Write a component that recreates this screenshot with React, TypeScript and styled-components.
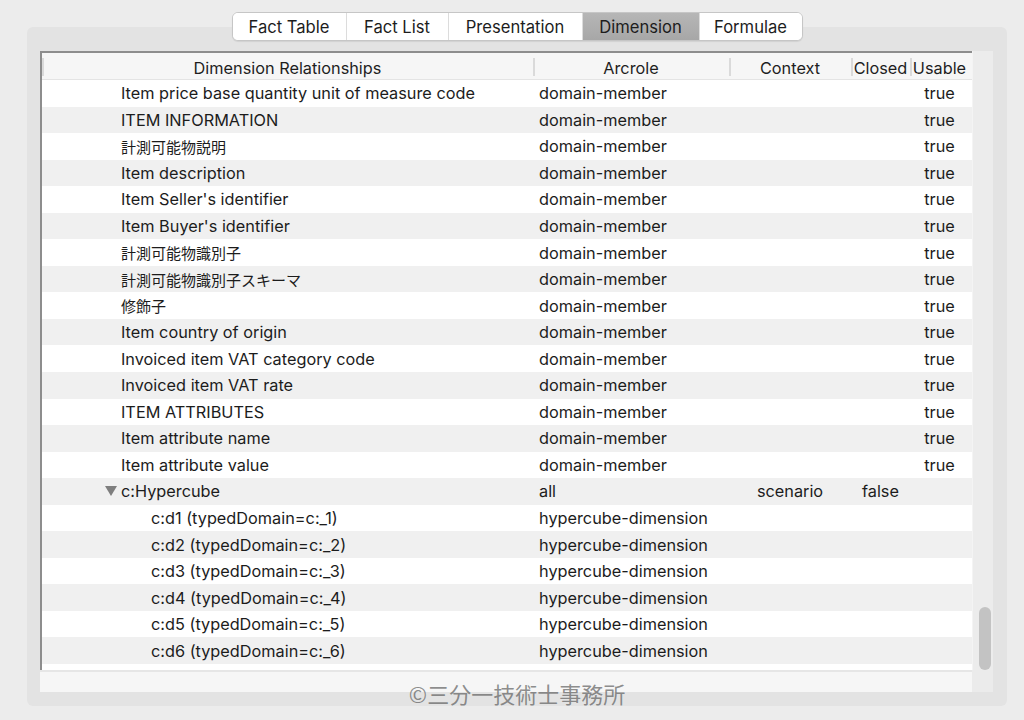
import React from "react";
import styled, { createGlobalStyle } from "styled-components";

const GlobalStyle = createGlobalStyle`
  html, body { margin: 0; padding: 0; background: #ececec; }
  body { font-family: Inter, "Noto Sans", "Noto Sans CJK JP", sans-serif; color: #1c1c1c; }
  * { box-sizing: border-box; }
`;

const FONT = `Inter, "Noto Sans CJK JP", sans-serif`;

const Page = styled.div`
  position: relative;
  width: 1024px;
  height: 720px;
  padding: 12px 17px 14px 27px;
  display: flex;
  flex-direction: column;
`;

const TabBar = styled.div`
  position: relative;
  z-index: 1;
  align-self: center;
  display: flex;
  height: 29px;
  margin-bottom: -14px;
  background: #ffffff;
  border: 1px solid #c6c6c6;
  border-radius: 6px;
  box-shadow: 0 1px 1px rgba(0, 0, 0, 0.08);
  overflow: hidden;
`;

const Tab = styled.div<{ $w: number; $active?: boolean }>`
  width: ${(p) => p.$w}px;
  display: flex;
  align-items: center;
  justify-content: center;
  font-family: ${FONT};
  font-size: 16.6px;
  color: #1d1d1d;
  background: ${(p) => (p.$active ? "linear-gradient(#b6b6b6, #a7a7a7)" : "#ffffff")};
  & + & {
    border-left: 1px solid #dcdcdc;
  }
`;

const Panel = styled.div`
  flex: 0 0 679px;
  background: #e3e3e3;
  border-radius: 6px;
  padding: 24px 14px 14px 13px;
`;

const ScrollView = styled.div`
  height: 100%;
  display: grid;
  grid-template-columns: 932px 21px;
  grid-template-rows: 619px 22px;
`;

const TableFrame = styled.div`
  background: #ffffff;
  border-top: 2px solid #8d8d8d;
  border-left: 2px solid #8d8d8d;
  overflow: hidden;
`;

const cols = "491px 196px 122px 59px 59px";

const HeaderRow = styled.div`
  display: grid;
  grid-template-columns: ${cols};
  height: 27px;
  padding-top: 3px;
  background: #f6f6f6;
  border-bottom: 1px solid #e4e4e4;
`;

const HeaderCell = styled.div<{ $divider?: boolean }>`
  position: relative;
  display: flex;
  align-items: center;
  justify-content: center;
  font-family: ${FONT};
  font-size: 16.3px;
  color: #1e1e1e;
  white-space: nowrap;
  &::before {
    content: "";
    position: absolute;
    left: 0;
    top: 2px;
    bottom: 3px;
    width: 2px;
    background: ${(p) => (p.$divider ? "#dadada" : "transparent")};
  }
`;

const Row = styled.div<{ $alt: boolean }>`
  display: grid;
  grid-template-columns: ${cols};
  height: 26.55px;
  align-items: center;
  background: ${(p) => (p.$alt ? "#f0f0f0" : "#ffffff")};
  font-family: ${FONT};
  font-size: 16.3px;
  color: #1c1c1c;
  white-space: nowrap;
`;

const NameCell = styled.div<{ $level: number }>`
  display: flex;
  align-items: center;
  padding-left: ${(p) => (p.$level === 2 ? 93 : 63)}px;
`;

const NameText = styled.span<{ $cjk: boolean }>`
  font-size: ${(p) => (p.$cjk ? "15px" : "inherit")};
`;

const Disclosure = styled.span`
  display: inline-flex;
  width: 16px;
  align-items: center;
  justify-content: flex-start;
`;

const TextCell = styled.div<{ $center?: boolean }>`
  padding-left: ${(p) => (p.$center ? 0 : 6)}px;
  text-align: ${(p) => (p.$center ? "center" : "left")};
`;

const VTrack = styled.div`
  background: #ececec;
  border-left: 1px solid #f4f4f4;
  display: flex;
  flex-direction: column;
  justify-content: flex-end;
  align-items: center;
`;

const Thumb = styled.div`
  width: 12px;
  height: 63px;
  border-radius: 6px;
  background: #c3c3c3;
  margin-left: 4px;
`;

const HTrack = styled.div`
  background: #f6f6f6;
  border-top: 2px solid #e6e6e6;
`;

const Corner = styled.div`
  background: #ebebeb;
`;

const Watermark = styled.div`
  position: absolute;
  left: 0;
  right: 0;
  top: 677px;
  text-align: center;
  padding-left: 10px;
  font-family: "Noto Sans CJK JP", sans-serif;
  font-size: 22px;
  color: rgba(100, 100, 100, 0.72);
  pointer-events: none;
`;

type R = { name: string; level: number; arc: string; ctx?: string; closed?: string; usable?: string; open?: boolean };

const dm = (name: string): R => ({ name, level: 1, arc: "domain-member", usable: "true" });
const hd = (n: number): R => ({ name: `c:d${n} (typedDomain=c:_${n})`, level: 2, arc: "hypercube-dimension" });

const rows: R[] = [
  dm("Item price base quantity unit of measure code"),
  dm("ITEM INFORMATION"),
  dm("計測可能物説明"),
  dm("Item description"),
  dm("Item Seller's identifier"),
  dm("Item Buyer's identifier"),
  dm("計測可能物識別子"),
  dm("計測可能物識別子スキーマ"),
  dm("修飾子"),
  dm("Item country of origin"),
  dm("Invoiced item VAT category code"),
  dm("Invoiced item VAT rate"),
  dm("ITEM ATTRIBUTES"),
  dm("Item attribute name"),
  dm("Item attribute value"),
  { name: "c:Hypercube", level: 1, arc: "all", ctx: "scenario", closed: "false", open: true },
  hd(1),
  hd(2),
  hd(3),
  hd(4),
  hd(5),
  hd(6),
];

const tabs = [
  { label: "Fact Table", w: 113 },
  { label: "Fact List", w: 102 },
  { label: "Presentation", w: 134 },
  { label: "Dimension", w: 117, active: true },
  { label: "Formulae", w: 103 },
];

const isCjk = (s: string) => /[\u3000-\u9fff]/.test(s);

export default function App() {
  return (
    <>
      <GlobalStyle />
      <Page>
        <TabBar>
          {tabs.map((t) => (
            <Tab key={t.label} $w={t.w} $active={t.active}>
              {t.label}
            </Tab>
          ))}
        </TabBar>
        <Panel>
          <ScrollView>
            <TableFrame>
              <HeaderRow>
                <HeaderCell $divider>Dimension Relationships</HeaderCell>
                <HeaderCell $divider>Arcrole</HeaderCell>
                <HeaderCell $divider>Context</HeaderCell>
                <HeaderCell $divider>Closed</HeaderCell>
                <HeaderCell $divider>Usable</HeaderCell>
              </HeaderRow>
              {rows.map((r, i) => (
                <Row key={i} $alt={i % 2 === 1}>
                  <NameCell $level={r.level}>
                    <Disclosure>
                      {r.open && (
                        <svg width="12" height="10" viewBox="0 0 12 10">
                          <polygon points="0,0 12,0 6,10" fill="#7e7e7e" />
                        </svg>
                      )}
                    </Disclosure>
                    <NameText $cjk={isCjk(r.name)}>{r.name}</NameText>
                  </NameCell>
                  <TextCell>{r.arc}</TextCell>
                  <TextCell $center>{r.ctx ?? ""}</TextCell>
                  <TextCell $center>{r.closed ?? ""}</TextCell>
                  <TextCell $center>{r.usable ?? ""}</TextCell>
                </Row>
              ))}
            </TableFrame>
            <VTrack>
              <Thumb />
            </VTrack>
            <HTrack />
            <Corner />
          </ScrollView>
        </Panel>
        <Watermark>©三分一技術士事務所</Watermark>
      </Page>
    </>
  );
}
